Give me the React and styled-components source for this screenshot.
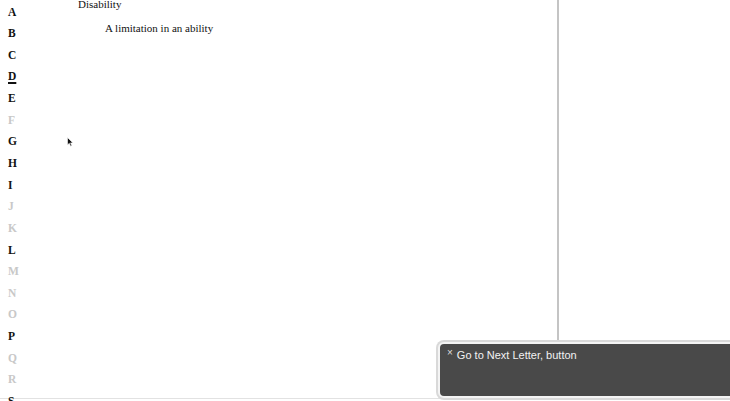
import React from "react";
import styled, { createGlobalStyle } from "styled-components";

const Global = createGlobalStyle`
  html, body { margin: 0; padding: 0; background: #fff; }
  body { font-family: "Liberation Serif", "Times New Roman", serif; overflow: hidden; }
  #root { width: 730px; height: 401px; }
`;

const Page = styled.div`
  position: relative;
  width: 730px;
  height: 401px;
  display: flex;
  overflow: hidden;
`;

const Main = styled.div`
  width: 559px;
  height: 399px;
  border-right: 2px solid #c4c4c4;
  border-bottom: 1px solid #e2e2e2;
  box-sizing: border-box;
  display: flex;
`;

const Rest = styled.div`
  flex: 1;
  height: 399px;
  border-bottom: 1px solid #e2e2e2;
`;

const LetterNav = styled.nav`
  width: 78px;
  padding: 1.5px 0 0 8px;
  box-sizing: border-box;
  display: flex;
  flex-direction: column;
`;

const Letter = styled.span`
  display: block;
  height: 21.65px;
  line-height: 21.65px;
  font-size: 11.5px;
  font-weight: bold;
  color: ${(p) => (p.$disabled ? "#c8c8c8" : "#111")};
  text-decoration: ${(p) => (p.$current ? "underline" : "none")};
  text-decoration-thickness: 2px;
  text-underline-offset: 2px;
  flex-shrink: 0;
`;

const Terms = styled.dl`
  margin: -4px 0 0 0;
  font-size: 11px;
  color: #111;
`;

const Term = styled.dt`
  line-height: 16px;
`;

const Definition = styled.dd`
  margin: 8px 0 0 27px;
  line-height: 16px;
`;

const Cursor = styled.svg`
  position: absolute;
  left: 67px;
  top: 137px;
`;

const Toast = styled.div`
  position: absolute;
  left: 438px;
  top: 342px;
  width: 310px;
  height: 56px;
  box-sizing: border-box;
  background: #494949;
  border: 2px solid #f4f4f4;
  border-radius: 6px;
  box-shadow: 0 0 0 2px #d9d9d9;
  padding: 3px 7px;
  display: flex;
  align-items: flex-start;
  gap: 4px;
  font-family: "Liberation Sans", Arial, sans-serif;
  color: #f2f2f2;
`;

const Close = styled.span`
  font-size: 10px;
  line-height: 10px;
  color: #ddd;
  margin-top: 1px;
`;

const ToastText = styled.span`
  font-size: 11px;
  line-height: 16px;
`;

const letters = [
  ["A"], ["B"], ["C"], ["D", "cur"], ["E"], ["F", "dis"], ["G"], ["H"], ["I"],
  ["J", "dis"], ["K", "dis"], ["L"], ["M", "dis"], ["N", "dis"], ["O", "dis"],
  ["P"], ["Q", "dis"], ["R", "dis"], ["S"],
];

export default function App() {
  return (
    <>
      <Global />
      <Page>
        <Main>
          <LetterNav>
            {letters.map(([l, s]) => (
              <Letter key={l} $disabled={s === "dis"} $current={s === "cur"}>
                {l}
              </Letter>
            ))}
          </LetterNav>
          <Terms>
            <Term>Disability</Term>
            <Definition>A limitation in an ability</Definition>
          </Terms>
        </Main>
        <Rest />
        <Cursor width="7" height="10" viewBox="0 0 7 10">
          <path d="M0.5 0.5 L0.5 8 L2.3 6.3 L3.6 9.3 L4.8 8.8 L3.6 5.9 L6 5.9 Z" fill="#111" stroke="#fff" strokeWidth="0.6" />
        </Cursor>
        <Toast>
          <Close>×</Close>
          <ToastText>Go to Next Letter, button</ToastText>
        </Toast>
      </Page>
    </>
  );
}
